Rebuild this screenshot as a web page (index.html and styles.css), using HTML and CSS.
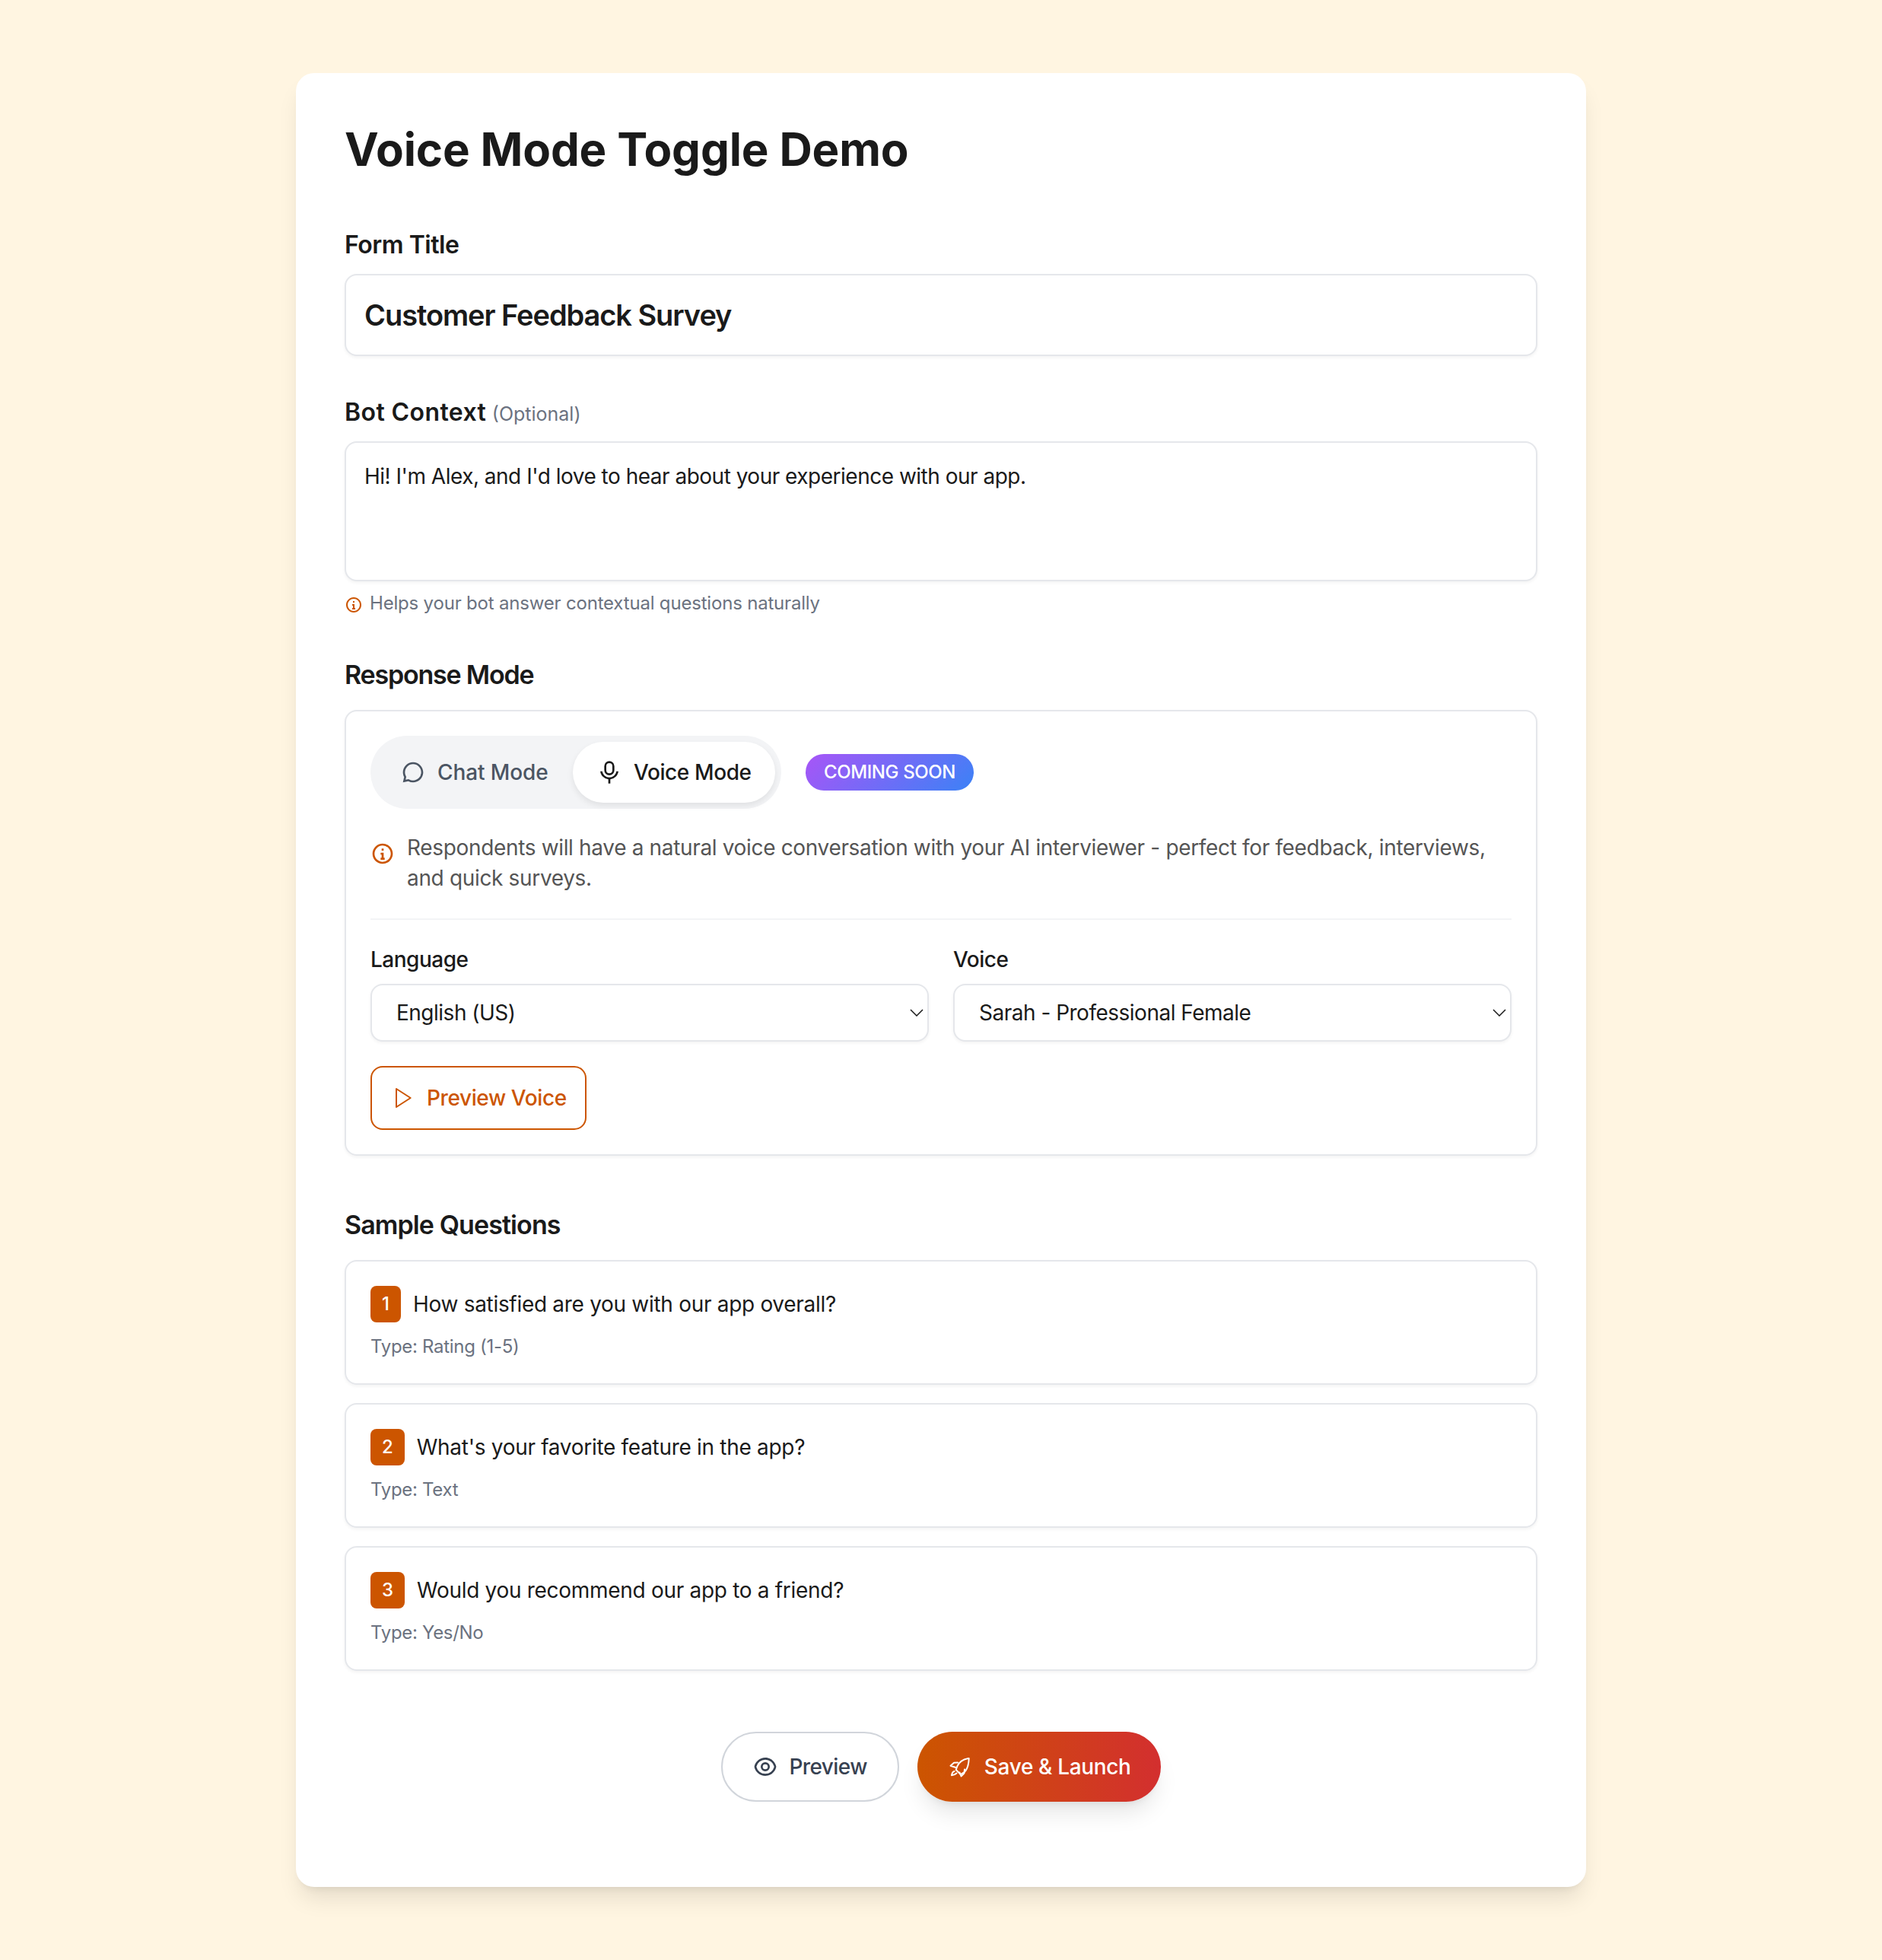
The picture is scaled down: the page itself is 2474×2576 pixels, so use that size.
FILE: index.html
```html
<!DOCTYPE html>
<html>
<head>
	<meta charset="utf-8">
	<title>Voice Mode Toggle Demo</title>
	<link rel="stylesheet" href="styles.css">
</head>
<body>
	<main class="card">
		<h1 class="page-title">Voice Mode Toggle Demo</h1>

		<section class="field">
			<label class="field-label">Form Title</label>
			<input class="title-input" type="text" value="Customer Feedback Survey">
		</section>

		<section class="field">
			<label class="field-label"><span class="label-bot">Bot Context</span> <span class="optional">(Optional)</span></label>
			<textarea class="context-input" rows="3">Hi! I'm Alex, and I'd love to hear about your experience with our app.</textarea>
			<p class="hint">
				<svg class="hint-icon" viewBox="0 0 24 24"><path d="M12 22C6.477 22 2 17.523 2 12S6.477 2 12 2s10 4.477 10 10-4.477 10-10 10zm0-2a8 8 0 1 0 0-16 8 8 0 0 0 0 16zM11 7h2v2h-2V7zm-1 4h3v5h1v2h-4v-2h1v-3h-1v-2z"/></svg>
				Helps your bot answer contextual questions naturally
			</p>
		</section>

		<section class="field field-mode">
			<label class="field-label label-mode">Response Mode</label>
			<div class="panel">
				<div class="mode-row">
					<div class="mode-toggle">
						<button class="mode-btn mode-chat">
							<svg class="icon" viewBox="0 0 24 24"><path d="M7.291 20.824L2 22l1.176-5.291A9.956 9.956 0 0 1 2 12C2 6.477 6.477 2 12 2s10 4.477 10 10-4.477 10-10 10a9.956 9.956 0 0 1-4.709-1.176zm.29-2.113l.653.35A7.955 7.955 0 0 0 12 20a8 8 0 1 0-8-8c0 1.334.325 2.618.94 3.766l.349.653-.655 2.947 2.947-.655z"/></svg>
							Chat Mode
						</button>
						<button class="mode-btn mode-voice">
							<svg class="icon" viewBox="0 0 24 24"><path d="M12 3a3 3 0 0 0-3 3v4a3 3 0 0 0 6 0V6a3 3 0 0 0-3-3zm0-2a5 5 0 0 1 5 5v4a5 5 0 0 1-10 0V6a5 5 0 0 1 5-5zM3.055 11H5.07a7.002 7.002 0 0 0 13.858 0h2.016A9.004 9.004 0 0 1 13 18.945V23h-2v-4.055A9.004 9.004 0 0 1 3.055 11z"/></svg>
							Voice Mode
						</button>
					</div>
					<span class="soon-badge">COMING SOON</span>
				</div>

				<div class="mode-info">
					<svg class="icon info-icon" viewBox="0 0 24 24"><path d="M12 22C6.477 22 2 17.523 2 12S6.477 2 12 2s10 4.477 10 10-4.477 10-10 10zm0-2a8 8 0 1 0 0-16 8 8 0 0 0 0 16zM11 7h2v2h-2V7zm-1 4h3v5h1v2h-4v-2h1v-3h-1v-2z"/></svg>
					<p>Respondents will have a natural voice conversation with your AI interviewer - perfect for feedback, interviews, and quick surveys.</p>
				</div>

				<div class="voice-grid">
					<div>
						<label class="small-label">Language</label>
						<div class="select-wrap">
							<select class="select"><option>English (US)</option></select>
							<svg class="chevron" viewBox="0 0 18 10"><path d="M1 1l8 8 8-8"/></svg>
						</div>
					</div>
					<div>
						<label class="small-label">Voice</label>
						<div class="select-wrap">
							<select class="select"><option>Sarah - Professional Female</option></select>
							<svg class="chevron" viewBox="0 0 18 10"><path d="M1 1l8 8 8-8"/></svg>
						</div>
					</div>
				</div>

				<button class="voice-preview">
					<svg class="icon play-icon" viewBox="0 0 24 24"><polygon points="6 3 20 12 6 21"/></svg>
					Preview Voice
				</button>
			</div>
		</section>

		<section class="questions">
			<h2 class="field-label label-questions">Sample Questions</h2>

			<div class="question">
				<div class="question-line"><span class="question-num">1</span><span>How satisfied are you with our app overall?</span></div>
				<div class="question-type">Type: Rating (1-5)</div>
			</div>
			<div class="question">
				<div class="question-line"><span class="question-num">2</span><span>What's your favorite feature in the app?</span></div>
				<div class="question-type">Type: Text</div>
			</div>
			<div class="question">
				<div class="question-line"><span class="question-num">3</span><span>Would you recommend our app to a friend?</span></div>
				<div class="question-type">Type: Yes/No</div>
			</div>
		</section>

		<div class="actions">
			<button class="action-btn action-preview">
				<svg class="icon" viewBox="0 0 24 24"><path d="M12 3c5.392 0 9.878 3.88 10.819 9-.94 5.12-5.427 9-10.819 9-5.392 0-9.878-3.88-10.819-9C2.121 6.88 6.608 3 12 3zm0 16a9.005 9.005 0 0 0 8.777-7 9.005 9.005 0 0 0-17.554 0A9.005 9.005 0 0 0 12 19zm0-2.5a4.5 4.5 0 1 1 0-9 4.5 4.5 0 0 1 0 9zm0-2a2.5 2.5 0 1 0 0-5 2.5 2.5 0 0 0 0 5z"/></svg>
				Preview
			</button>
			<button class="action-btn action-save">
				<svg class="icon rocket-icon" viewBox="0 0 32 32"><path d="M27.7 5C20 6 15 10 12.5 15L10.7 20l6 6 5-3C26 19 27.5 12 27.7 5z"/><path d="M13 10.500L8 10.800 3.500 14.700 10.500 17"/><path d="M22 19.500l-.5 5-4 4-2-5"/><path d="M8.700 22C6.500 22.300 5.500 24 5 27.300 8 27 10 26 11.500 24.500"/></svg>
				Save &amp; Launch
			</button>
		</div>
	</main>
</body>
</html>
```

FILE: styles.css
```css
* {
	box-sizing: border-box;
}
body {
	margin: 0;
	padding: 96px 0;
	background-color: #fff5e1;
	color: #1a1a1a;
	font-family: "Inter", "Liberation Sans", sans-serif;
}
button, input, select, textarea {
	font-family: inherit;
	color: inherit;
}
.card {
	width: 1696px;
	height: 2384px;
	margin: 0 auto;
	padding: 64px;
	border-radius: 24px;
	background-color: #fff;
	box-shadow: 0 20px 30px -6px rgba(0, 0, 0, .1), 0 8px 12px -8px rgba(0, 0, 0, .1);
}
.page-title {
	margin: 0 0 62px;
	font-size: 60px;
	line-height: 72px;
	font-weight: 700;
	letter-spacing: -.15px;
}
.field {
	margin-bottom: 46px;
}
.field-label {
	display: block;
	margin-bottom: 10px;
	font-size: 32px;
	line-height: 56px;
	font-weight: 600;
	letter-spacing: -.5px;
}
.label-bot {
	letter-spacing: .4px;
}
.optional {
	font-size: 25px;
	line-height: 1;
	font-weight: 400;
	letter-spacing: 0;
	color: #6b7280;
}
.title-input, .context-input, .select {
	display: block;
	width: 100%;
	border: 2px solid #e5e7eb;
	border-radius: 16px;
	background-color: #fff;
	box-shadow: 0 2px 4px rgba(0, 0, 0, .05);
	outline: none;
}
.title-input {
	height: 108px;
	padding: 24px;
	font-size: 38px;
	font-weight: 600;
	letter-spacing: -1.07px;
}
.context-input {
	height: 184px;
	padding: 22px 24px;
	font-size: 28px;
	line-height: 44px;
	letter-spacing: -.5px;
	resize: none;
}
.hint {
	display: flex;
	align-items: center;
	gap: 9px;
	margin: 13px 0 0;
	font-size: 24px;
	line-height: 32px;
	letter-spacing: -.19px;
	color: #6b7280;
}
.hint-icon {
	width: 24px;
	height: 24px;
	margin-top: 4px;
	fill: #cc5500;
}
.field-mode {
	margin-bottom: 63px;
}
.label-mode, .label-questions {
	padding-top: 4px;
	margin-bottom: 18px;
	font-size: 34px;
	letter-spacing: -1.2px;
}
.label-questions {
	padding-top: 0;
	letter-spacing: -.9px;
}
.panel {
	padding: 32px;
	border: 2px solid #e5e7eb;
	border-radius: 16px;
	box-shadow: 0 2px 4px rgba(0, 0, 0, .05);
}
.mode-row {
	display: flex;
	align-items: center;
	gap: 32px;
	margin-bottom: 31px;
}
.mode-toggle {
	display: flex;
	width: 540px;
	height: 96px;
	padding: 8px;
	border-radius: 48px;
	background-color: #f3f4f6;
}
.mode-btn {
	display: flex;
	align-items: center;
	gap: 16px;
	padding: 0 32px;
	border: 0;
	border-radius: 40px;
	background: none;
	font-size: 28px;
	font-weight: 500;
	letter-spacing: -.1px;
	white-space: nowrap;
}
.mode-chat {
	width: 258px;
	color: #4b5563;
}
.mode-voice {
	width: 266px;
	background-color: #fff;
	box-shadow: 0 4px 8px rgba(0, 0, 0, .08);
	color: #1a1a1a;
	letter-spacing: -.4px;
}
.icon {
	flex: none;
	width: 32px;
	height: 32px;
	fill: currentColor;
}
.soon-badge {
	padding: 0 24px;
	border-radius: 24px;
	background: linear-gradient(135deg, #a855f7, #3b82f6);
	color: #fff;
	font-size: 24px;
	line-height: 48px;
	font-weight: 500;
	letter-spacing: -.4px;
}
.mode-info {
	display: flex;
	gap: 16px;
	padding-bottom: 33px;
	border-bottom: 2px solid #f3f4f6;
	font-size: 28px;
	line-height: 40px;
	letter-spacing: -.34px;
	color: #555;
}
.mode-info p {
	margin: 0;
}
.info-icon {
	margin-top: 12px;
	fill: #cc5500;
}
.voice-grid {
	display: grid;
	grid-template-columns: 1fr 1fr;
	gap: 32px;
	margin: 32px 0;
}
.small-label {
	display: block;
	margin-bottom: 12px;
	font-size: 28px;
	line-height: 40px;
	font-weight: 500;
	letter-spacing: -.5px;
}
.select-wrap {
	position: relative;
}
.select {
	height: 76px;
	padding: 0 32px;
	appearance: none;
	font-size: 28px;
	letter-spacing: -.5px;
}
.chevron {
	position: absolute;
	top: 33px;
	right: 7px;
	width: 18px;
	height: 10px;
	fill: none;
	stroke: #1a1a1a;
	stroke-width: 1.5;
}
.voice-preview {
	display: flex;
	align-items: center;
	gap: 16px;
	height: 84px;
	padding: 0 24px;
	border: 2px solid #cc5500;
	border-radius: 16px;
	background: none;
	color: #cc5500;
	font-size: 28px;
	font-weight: 500;
	letter-spacing: -.4px;
}
.play-icon {
	fill: none;
	stroke: #cc5500;
	stroke-width: 1.5;
	stroke-linejoin: round;
}
.questions {
	margin-bottom: 80px;
}
.question {
	height: 164px;
	margin-bottom: 24px;
	padding: 32px;
	border: 2px solid #e5e7eb;
	border-radius: 16px;
	box-shadow: 0 2px 4px rgba(0, 0, 0, .05);
}
.question:last-child {
	margin-bottom: 0;
}
.question-line {
	display: flex;
	align-items: center;
	gap: 16px;
	font-size: 28px;
	line-height: 48px;
	letter-spacing: -.3px;
}
.question-num {
	padding: 0 15px;
	border-radius: 8px;
	background-color: #cc5500;
	color: #fff;
	font-size: 24px;
	font-weight: 500;
	letter-spacing: 0;
}
.question-type {
	margin-top: 16px;
	font-size: 24px;
	line-height: 32px;
	letter-spacing: -.3px;
	color: #6b7280;
}
.actions {
	display: flex;
	justify-content: center;
	gap: 24px;
}
.action-btn {
	display: flex;
	align-items: center;
	gap: 16px;
	height: 92px;
	padding: 0 40px;
	border-radius: 46px;
	font-size: 28px;
	font-weight: 500;
	letter-spacing: -.35px;
}
.action-preview {
	border: 2px solid #d1d5db;
	background-color: #fff;
	color: #374151;
	letter-spacing: -.6px;
}
.action-save {
	border: 0;
	background: linear-gradient(90deg, #cc5500, #d32f2f);
	color: #fff;
	box-shadow: 0 20px 30px -6px rgba(0, 0, 0, .1), 0 8px 12px -8px rgba(0, 0, 0, .1);
}
.rocket-icon {
	fill: none;
	stroke: #fff;
	stroke-width: 2;
	stroke-linejoin: round;
	stroke-linecap: round;
}
```
